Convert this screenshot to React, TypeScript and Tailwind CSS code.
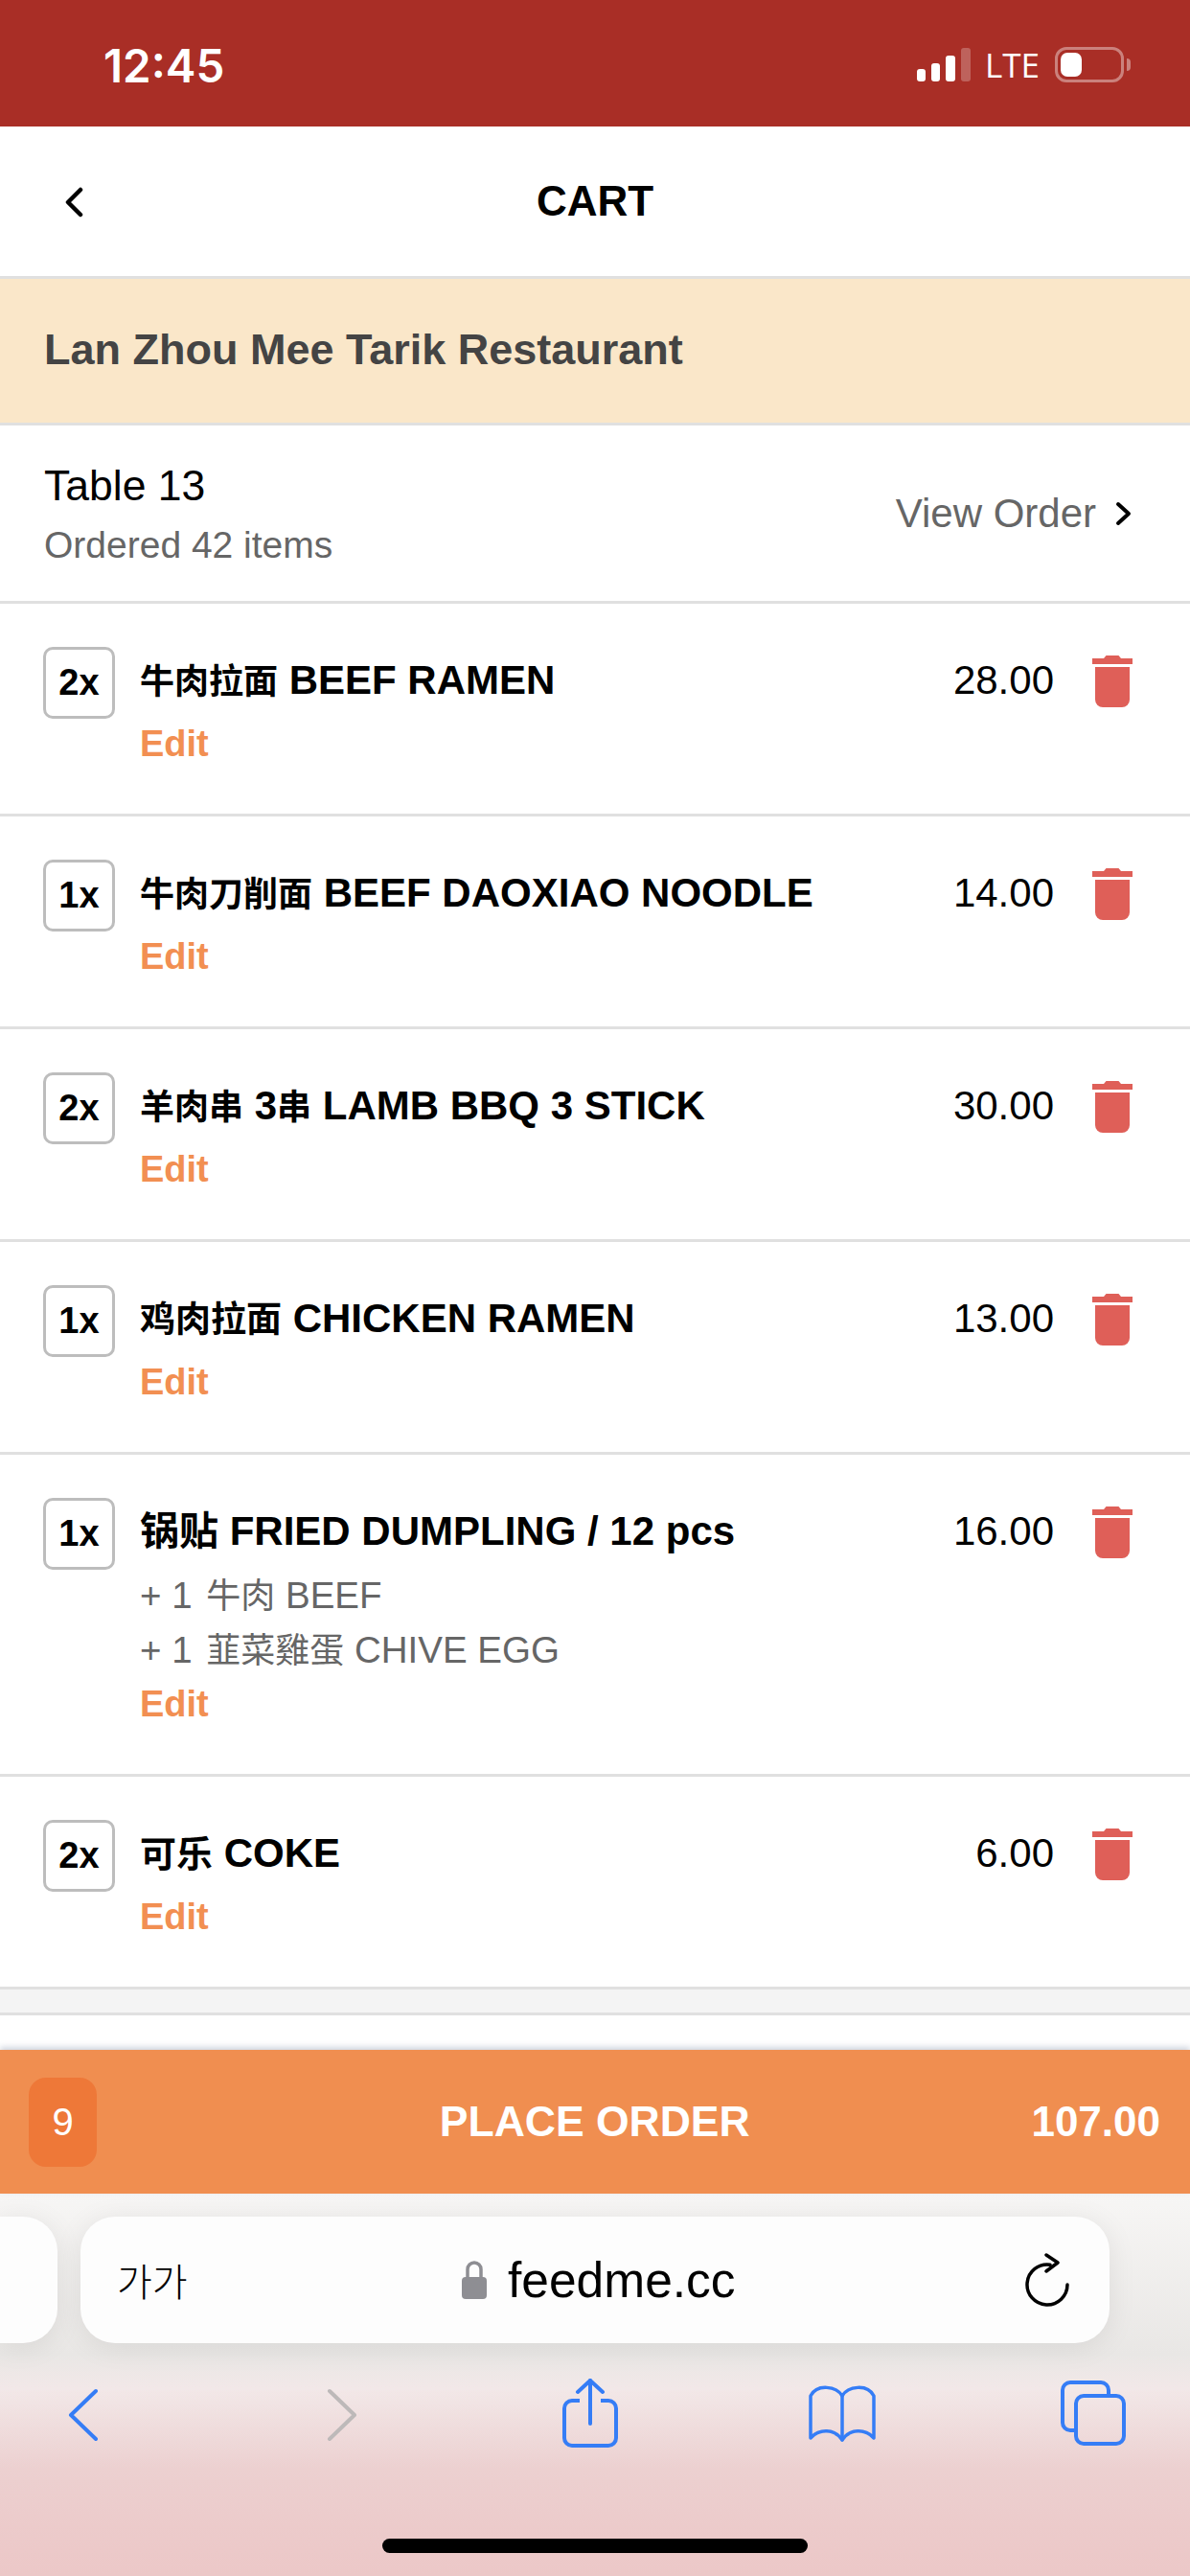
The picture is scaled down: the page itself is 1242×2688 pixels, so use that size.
import React from 'react'

const SANS = 'font-["Liberation_Sans","Noto_Sans_CJK_SC",sans-serif]'

type Item = {
  qty: string
  title: React.ReactNode
  name: string
  price: string
  extras?: [string, string][]
}

const ITEMS: Item[] = [
  { qty: '2x', title: <span className="text-[36px]">牛肉拉面</span>, name: 'BEEF RAMEN', price: '28.00' },
  { qty: '1x', title: <span className="text-[36px]">牛肉刀削面</span>, name: 'BEEF DAOXIAO NOODLE', price: '14.00' },
  {
    qty: '2x',
    title: (
      <>
        <span className="text-[36px]">羊肉串</span> 3<span className="text-[36px]">串</span>
      </>
    ),
    name: 'LAMB BBQ 3 STICK',
    price: '30.00',
  },
  { qty: '1x', title: <span className="text-[37px]">鸡肉拉面</span>, name: 'CHICKEN RAMEN', price: '13.00' },
  {
    qty: '1x',
    title: <span className="text-[41px]">锅贴</span>,
    name: 'FRIED DUMPLING / 12 pcs',
    price: '16.00',
    extras: [
      ['牛肉', 'BEEF'],
      ['韮菜雞蛋', 'CHIVE EGG'],
    ],
  },
  { qty: '2x', title: <span className="text-[38px]">可乐</span>, name: 'COKE', price: '6.00' },
]

function Trash() {
  return (
    <svg viewBox="0 0 42 54" className="mt-[9px] ml-[40px] h-[54px] w-[42px] shrink-0" fill="#df5f58">
      <path d="M12 3 L14.5 0 H27.5 L30 3 H42 V9 H0 V3 Z" />
      <path d="M3 12 H39 V46 A8 8 0 0 1 31 54 H11 A8 8 0 0 1 3 46 Z" />
    </svg>
  )
}

function Row({ item }: { item: Item }) {
  return (
    <div className="flex border-b-[3px] border-[#e0e0e0] pt-[45px] pr-[60px] pb-[50px] pl-[45px]">
      <div className="flex h-[75px] w-[75px] shrink-0 items-center justify-center rounded-[10px] border-[3px] border-[#bdbdbd] text-[38px] font-bold text-black">
        {item.qty}
      </div>
      <div className="ml-[26px] flex-1 pt-[11px]">
        <div className="h-[48px] text-[42px] leading-[48px] font-bold text-black">
          {item.title} {item.name}
        </div>
        {item.extras && (
          <div className="mt-[15px] text-[38.5px] leading-[56px] text-[#666666]">
            {item.extras.map(([cjk, name]) => (
              <div key={name}>
                + 1 <span className="ml-[4px] text-[36px]">{cjk}</span> {name}
              </div>
            ))}
          </div>
        )}
        <div className={`${item.extras ? 'mt-[5px]' : 'mt-[20px]'} h-[45px] text-[38px] leading-[45px] font-bold text-[#f28f52]`}>
          Edit
        </div>
      </div>
      <div className="pt-[11px] text-[42px] leading-[48px] text-black">{item.price}</div>
      <Trash />
    </div>
  )
}

function StatusBar() {
  return (
    <div className="flex h-[132px] items-start bg-[#a92e26] text-white">
      <div className='mt-[42px] ml-[108px] font-["Inter",sans-serif] text-[47.5px] leading-[54px] font-semibold'>12:45</div>
      <div className="mt-[50px] ml-auto flex items-start pr-[62px]">
        <div className="flex h-[35px] items-end gap-[6px]">
          <span className="h-[13px] w-[9px] rounded-[3px] bg-white" />
          <span className="h-[19px] w-[9px] rounded-[3px] bg-white" />
          <span className="h-[27px] w-[10px] rounded-[3px] bg-white" />
          <span className="h-[35px] w-[10px] rounded-[3px] bg-white/25" />
        </div>
        <div className='ml-[15px] font-["Open_Sans",sans-serif] text-[35px] leading-[36px]'>LTE</div>
        <div className="ml-[16px] flex h-[37px] w-[72px] -translate-y-[1px] items-center rounded-[12px] border-[3px] border-white/40 px-[3px]">
          <span className="h-[25px] w-[22px] rounded-[7px] bg-white" />
        </div>
        <span className="mt-[11px] ml-[3px] h-[13px] w-[4px] rounded-r-[4px] bg-white/40" />
      </div>
    </div>
  )
}

function Toolbar() {
  return (
    <div className="mt-[37px] flex h-[72px] items-center pl-[71px]">
      <svg viewBox="0 0 32 56" className="mt-[3px] h-[56px] w-[32px]" fill="none" stroke="#357df6" strokeWidth="4" strokeLinecap="round" strokeLinejoin="round">
        <path d="M29 3 L3 28 L29 53" />
      </svg>
      <svg viewBox="0 0 32 56" className="mt-[3px] ml-[238px] h-[56px] w-[32px]" fill="none" stroke="#bdb9b9" strokeWidth="4" strokeLinecap="round" strokeLinejoin="round">
        <path d="M3 3 L29 28 L3 53" />
      </svg>
      <svg viewBox="0 0 58 72" className="ml-[214px] h-[72px] w-[58px]" fill="none" stroke="#357df6" strokeWidth="4" strokeLinecap="round" strokeLinejoin="round">
        <path d="M18 23 H10 A8 8 0 0 0 2 31 V62 A8 8 0 0 0 10 70 H48 A8 8 0 0 0 56 62 V31 A8 8 0 0 0 48 23 H40" strokeLinecap="butt" />
        <path d="M29 2 V47" />
        <path d="M16 14 L29 2 L42 14" />
      </svg>
      <svg viewBox="0 0 72 60" className="ml-[198px] h-[60px] w-[72px]" fill="none" stroke="#357df6" strokeWidth="3.5" strokeLinecap="round" strokeLinejoin="round">
        <path d="M36 12 C30 2 10 -1 3 12 V56 C12 46 28 46 36 58 C44 46 60 46 69 56 V12 C62 -1 42 2 36 12 Z" />
        <path d="M36 12 V58" />
      </svg>
      <svg viewBox="0 0 68 68" className="ml-[192px] h-[68px] w-[68px]" fill="none" stroke="#357df6" strokeWidth="4" strokeLinejoin="round">
        <path d="M16 52 H10 A8 8 0 0 1 2 44 V10 A8 8 0 0 1 10 2 H42 A8 8 0 0 1 50 10 V16" />
        <rect x="16" y="16" width="50" height="50" rx="8" />
      </svg>
    </div>
  )
}

export default function App() {
  return (
    <div className={`${SANS} flex h-[2688px] w-[1242px] flex-col overflow-hidden bg-white`}>
      <StatusBar />

      <div className="relative flex h-[159px] shrink-0 items-center justify-center border-b-[3px] border-[#e0e0e0]">
        <svg viewBox="0 0 20 32" className="absolute top-[63px] left-[67px] h-[32px] w-[20px]" fill="none" stroke="black" strokeWidth="4.5" strokeLinecap="round" strokeLinejoin="round">
          <path d="M17 3 L4 16 L17 29" />
        </svg>
        <div className="text-[44px] font-bold text-black">CART</div>
      </div>

      <div className="flex h-[153px] shrink-0 items-center border-b-[3px] border-[#e0e0e0] bg-[#fae7c9] pb-[3px] pl-[46px] text-[45px] font-bold text-[#444444]">
        Lan Zhou Mee Tarik Restaurant
      </div>

      <div className="flex h-[186px] shrink-0 items-center justify-between border-b-[3px] border-[#e0e0e0] pr-[60px] pl-[46px]">
        <div className="pt-[3px]">
          <div className="text-[44.5px] leading-[52px] text-black">Table 13</div>
          <div className="mt-[11px] text-[39px] leading-[50px] text-[#666666]">Ordered 42 items</div>
        </div>
        <div className="flex items-center text-[42px] text-[#666666]">
          View Order
          <svg viewBox="0 0 18 26" className="ml-[20px] h-[26px] w-[18px]" fill="none" stroke="black" strokeWidth="4" strokeLinecap="round" strokeLinejoin="round">
            <path d="M3 3 L14 13 L3 23" />
          </svg>
        </div>
      </div>

      {ITEMS.map((item) => (
        <Row key={item.name} item={item} />
      ))}

      <div className="h-[27px] shrink-0 border-b-[3px] border-[#e0e0e0] bg-[#f4f4f4]" />
      <div className="flex-1" />

      <div className="relative flex h-[150px] shrink-0 items-center bg-[#f08e50] pr-[31px] pl-[30px] text-white shadow-[0_-3px_6px_rgba(100,120,150,0.3)]">
        <div className="flex h-[93px] w-[71px] items-center justify-center rounded-[18px] bg-[#ee7838] text-[40px]">9</div>
        <div className="flex-1 pl-[64px] text-center text-[44.5px] font-bold">PLACE ORDER</div>
        <div className="text-[44px] font-bold">107.00</div>
      </div>

      <div className="h-[399px] shrink-0 bg-[linear-gradient(to_bottom,#f7f6f5_0%,#e9e7e5_42%,#f2e8e8_51%,#ecd0d0_72%,#ecc9c9_93%,#ecc8c8_100%)]">
        <div className="mt-[24px] flex h-[132px] gap-[24px]">
          <div className="w-[60px] rounded-r-[36px] bg-[#fdfdfd] shadow-[0_4px_30px_rgba(0,0,0,0.08)]" />
          <div className="relative flex w-[1074px] items-center rounded-[36px] bg-[#fdfdfd] pr-[42px] pl-[38px] shadow-[0_4px_30px_rgba(0,0,0,0.08)]">
            <div className='font-["Noto_Sans_CJK_KR",sans-serif] text-[40px] font-light text-black'>가가</div>
            <div className="flex flex-1 items-center justify-center pr-[16px]">
              <svg viewBox="0 0 26 40" className="h-[40px] w-[26px]" fill="#8e8e93">
                <path d="M6 17 V9 A7 7 0 0 1 20 9 V17" fill="none" stroke="#8e8e93" strokeWidth="3.5" />
                <rect x="0" y="17" width="26" height="23" rx="4" />
              </svg>
              <span className="ml-[22px] pt-[2px] text-[51.5px] text-black">feedme.cc</span>
            </div>
            <svg viewBox="0 0 46 56" className="h-[56px] w-[46px]" fill="none" stroke="black" strokeWidth="3.5" strokeLinecap="round" strokeLinejoin="round">
              <path d="M26 12.2 A21 21 0 1 0 44 33" />
              <path d="M22 2 L34 10 L22 19" />
            </svg>
          </div>
        </div>
        <Toolbar />
        <div className="mx-auto mt-[95px] h-[15px] w-[444px] rounded-full bg-black" />
      </div>
    </div>
  )
}
